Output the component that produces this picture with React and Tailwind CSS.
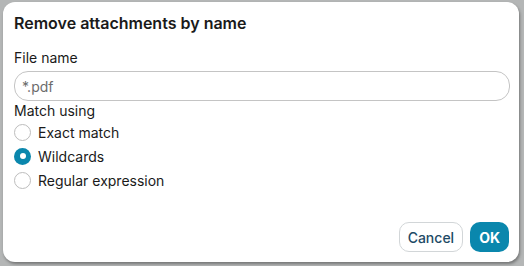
export default function App() {
  return (
    <div className="w-[524px] h-[266px] bg-[#b4b6b6] pt-[2px] pl-[3px]" style={{ fontFamily: "Inter, 'Liberation Sans', sans-serif" }}>
      <div className="w-[516px] h-[260px] bg-white rounded-[12px] shadow-[1px_2px_3px_rgba(0,0,0,0.35)] flex flex-col px-[11px] pt-[11px] pb-[10px]">
        <div className="text-[16px] font-semibold text-[#1a1a1a] leading-[20px]">Remove attachments by name</div>
        <div className="mt-[16px] text-[14px] text-[#1a1a1a] leading-[18px]">File name</div>
        <div className="mt-[4px] h-[30px] w-[496px] rounded-[14px] border border-[#c4c4c4] flex items-center px-[7px] text-[14px] text-[#6b6b6b]">*.pdf</div>
        <div className="mt-[1px] text-[14px] text-[#1a1a1a] leading-[18px]">Match using</div>
        <div className="flex flex-col">
          {[
            ["Exact match", false],
            ["Wildcards", true],
            ["Regular expression", false],
          ].map(([label, sel]) => (
            <div key={label} className="flex items-center h-[24px] gap-[7px]">
              {sel ? (
                <div className="w-[17px] h-[17px] rounded-full bg-[#0a87ad] flex items-center justify-center">
                  <div className="w-[6px] h-[6px] rounded-full bg-white" />
                </div>
              ) : (
                <div className="w-[17px] h-[17px] rounded-full border border-[#bdbdbd] bg-white" />
              )}
              <span className="text-[14px] text-[#1a1a1a]">{label}</span>
            </div>
          ))}
        </div>
        <div className="flex-1" />
        <div className="flex justify-end gap-[7px] -mr-[1px]">
          <button className="h-[30px] px-[8px] rounded-[10px] border border-[#d2d6d8] bg-white text-[14px] font-medium text-[#1d4a66]">Cancel</button>
          <button className="h-[30px] px-[9px] rounded-[10px] bg-[#0a87ad] text-[14px] font-bold text-white">OK</button>
        </div>
      </div>
    </div>
  );
}
